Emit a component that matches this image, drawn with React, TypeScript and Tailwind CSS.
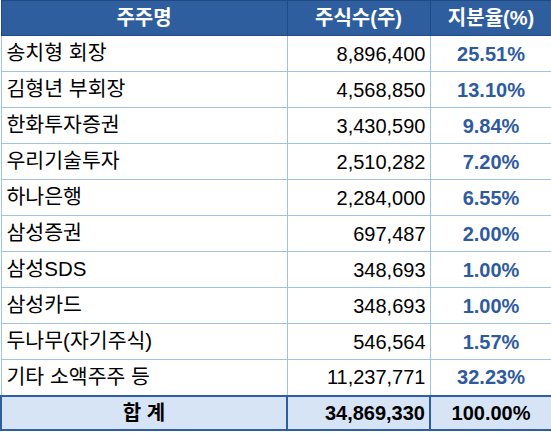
import React from 'react';

const rows = [
  { name: '송치형 회장', shares: '8,896,400', pct: '25.51%' },
  { name: '김형년 부회장', shares: '4,568,850', pct: '13.10%' },
  { name: '한화투자증권', shares: '3,430,590', pct: '9.84%' },
  { name: '우리기술투자', shares: '2,510,282', pct: '7.20%' },
  { name: '하나은행', shares: '2,284,000', pct: '6.55%' },
  { name: '삼성증권', shares: '697,487', pct: '2.00%' },
  { name: '삼성SDS', shares: '348,693', pct: '1.00%' },
  { name: '삼성카드', shares: '348,693', pct: '1.00%' },
  { name: '두나무(자기주식)', shares: '546,564', pct: '1.57%' },
  { name: '기타 소액주주 등', shares: '11,237,771', pct: '32.23%' },
];

const App: React.FC = () => {
  return (
    <div
      className="w-[551px] h-[433px] bg-white overflow-hidden"
      style={{ fontFamily: '"Liberation Sans", "Noto Sans CJK KR", sans-serif' }}
    >
      <table className="w-[551px] border-collapse table-fixed text-[20px] leading-none">
        <colgroup>
          <col className="w-[286px]" />
          <col className="w-[143px]" />
          <col className="w-[122px]" />
        </colgroup>
        <thead>
          <tr className="h-[35px] bg-[#2f5e9e] text-white font-bold">
            <th className="border border-[#1f4a82] text-center font-bold">주주명</th>
            <th className="border border-[#1f4a82] text-center font-bold">주식수(주)</th>
            <th className="border border-[#1f4a82] text-center font-bold">지분율(%)</th>
          </tr>
        </thead>
        <tbody>
          {rows.map((r) => (
            <tr key={r.name} className="h-[36px] text-black">
              <td className="border border-[#9dc3e6] pl-[5px] text-left text-[20.5px]">{r.name}</td>
              <td className="border border-[#9dc3e6] pr-[4px] text-right">{r.shares}</td>
              <td className="border border-[#9dc3e6] text-center font-bold text-[#2f5b9e]">{r.pct}</td>
            </tr>
          ))}
          <tr className="h-[34px] bg-[#d6e4f6] text-black font-bold">
            <td className="border-2 border-[#2f5e9e] text-center">합 계</td>
            <td className="border-2 border-[#2f5e9e] pr-[4px] text-right">34,869,330</td>
            <td className="border-2 border-[#2f5e9e] text-center">100.00%</td>
          </tr>
        </tbody>
      </table>
    </div>
  );
};

export default App;
